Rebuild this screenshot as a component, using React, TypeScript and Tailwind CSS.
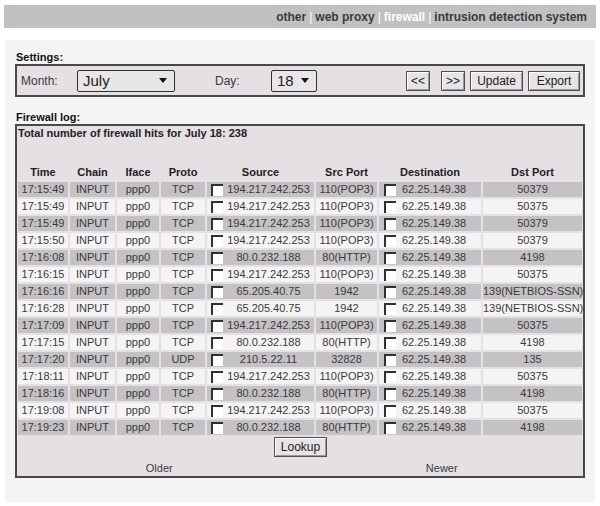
import React from 'react';

type Row = {
  time: string;
  proto: string;
  src: string;
  sport: string;
  dport: string;
};

const rows: Row[] = [
  { time: '17:15:49', proto: 'TCP', src: '194.217.242.253', sport: '110(POP3)', dport: '50379' },
  { time: '17:15:49', proto: 'TCP', src: '194.217.242.253', sport: '110(POP3)', dport: '50375' },
  { time: '17:15:49', proto: 'TCP', src: '194.217.242.253', sport: '110(POP3)', dport: '50379' },
  { time: '17:15:50', proto: 'TCP', src: '194.217.242.253', sport: '110(POP3)', dport: '50379' },
  { time: '17:16:08', proto: 'TCP', src: '80.0.232.188', sport: '80(HTTP)', dport: '4198' },
  { time: '17:16:15', proto: 'TCP', src: '194.217.242.253', sport: '110(POP3)', dport: '50375' },
  { time: '17:16:16', proto: 'TCP', src: '65.205.40.75', sport: '1942', dport: '139(NETBIOS-SSN)' },
  { time: '17:16:28', proto: 'TCP', src: '65.205.40.75', sport: '1942', dport: '139(NETBIOS-SSN)' },
  { time: '17:17:09', proto: 'TCP', src: '194.217.242.253', sport: '110(POP3)', dport: '50375' },
  { time: '17:17:15', proto: 'TCP', src: '80.0.232.188', sport: '80(HTTP)', dport: '4198' },
  { time: '17:17:20', proto: 'UDP', src: '210.5.22.11', sport: '32828', dport: '135' },
  { time: '17:18:11', proto: 'TCP', src: '194.217.242.253', sport: '110(POP3)', dport: '50375' },
  { time: '17:18:16', proto: 'TCP', src: '80.0.232.188', sport: '80(HTTP)', dport: '4198' },
  { time: '17:19:08', proto: 'TCP', src: '194.217.242.253', sport: '110(POP3)', dport: '50375' },
  { time: '17:19:23', proto: 'TCP', src: '80.0.232.188', sport: '80(HTTP)', dport: '4198' },
];

const font = { fontFamily: '"Liberation Sans", Arial, sans-serif' };

const Check = () => (
  <span className="block w-[12px] h-[12px] bg-white border-t-2 border-l-2 border-t-[#303030] border-l-[#303030] shrink-0" />
);

const Btn = ({ label, w }: { label: string; w: string }) => (
  <button
    className={`${w} h-[20px] border border-[#505050] bg-[#e6e4e6] text-[12px] text-[#222] leading-none shadow-[inset_1px_1px_0_#ffffff,inset_-1px_-1px_0_#9a989a]`}
  >
    {label}
  </button>
);

const Select = ({ value, w }: { value: string; w: string }) => (
  <div
    className={`${w} h-[22px] border border-[#303030] rounded-[2px] bg-[#e8e6e8] flex items-center justify-between pl-[5px] pr-[7px]`}
  >
    <span className="text-[15px] text-[#222] leading-none">{value}</span>
    <span className="w-0 h-0 border-l-[4px] border-r-[4px] border-t-[5px] border-l-transparent border-r-transparent border-t-[#111]" />
  </div>
);

export default function App() {
  return (
    <div className="w-[600px] h-[506px] bg-white text-[11px] text-[#3a3a3a]" style={font}>
      <div className="mx-[4px] mt-[5px] h-[23px] bg-[#c2c0c2] flex items-center justify-end pr-[9px] text-[12px] font-bold text-[#3a3a3a]">
        <span>other</span>
        <span className="text-white font-normal px-[3px]">|</span>
        <span>web proxy</span>
        <span className="text-white font-normal px-[3px]">|</span>
        <span className="text-white">firewall</span>
        <span className="text-white font-normal px-[3px]">|</span>
        <span>intrusion detection system</span>
      </div>

      <div className="mx-[5px] mt-[12px] h-[462px] bg-[#f4f4f4] px-[10px] pt-[10px]">
        <div className="font-bold text-[#111] leading-[14px] pl-[1px]">Settings:</div>
        <div className="h-[33px] border-2 border-[#484848] bg-[#e4e0e4] flex items-center pl-[4px] pr-[3px]">
          <span className="w-[56px] text-[12px]">Month:</span>
          <Select value="July" w="w-[98px]" />
          <span className="w-[56px] ml-[40px] text-[12px]">Day:</span>
          <Select value="18" w="w-[46px]" />
          <div className="ml-auto flex items-center gap-[5px]">
            <Btn label="<<" w="w-[24px]" />
            <span className="ml-[1px]" />
            <Btn label=">>" w="w-[24px]" />
            <Btn label="Update" w="w-[53px]" />
            <Btn label="Export" w="w-[52px]" />
          </div>
        </div>

        <div className="mt-[13px] font-bold text-[#111] leading-[14px] pl-[1px]">Firewall log:</div>
        <div className="h-[354px] border-2 border-[#484848] bg-[#e4e0e4] pl-[1px] pt-[1px]">
          <div className="font-bold text-[#222] leading-[13px]">
            Total number of firewall hits for July 18: 238
          </div>

          <div className="mt-[25px] grid grid-cols-[50px_45px_42px_44px_107px_61px_102px_99px] gap-[2px] leading-[15px] text-center">
            {['Time', 'Chain', 'Iface', 'Proto', 'Source', 'Src Port', 'Destination', 'Dst Port'].map((h) => (
              <div key={h} className="font-bold text-[#222] h-[15px]">
                {h}
              </div>
            ))}
            {rows.map((r, i) => {
              const bg = i % 2 === 0 ? 'bg-[#c4c2c4]' : 'bg-[#f4f4f4]';
              return (
                <React.Fragment key={i}>
                  <div className={`${bg} h-[15px]`}>{r.time}</div>
                  <div className={`${bg} h-[15px]`}>INPUT</div>
                  <div className={`${bg} h-[15px]`}>ppp0</div>
                  <div className={`${bg} h-[15px]`}>{r.proto}</div>
                  <div className={`${bg} h-[15px] flex items-center pl-[4px]`}>
                    <Check />
                    <span className="flex-1 text-center">{r.src}</span>
                  </div>
                  <div className={`${bg} h-[15px]`}>{r.sport}</div>
                  <div className={`${bg} h-[15px] flex items-center pl-[5px] gap-[6px]`}>
                    <Check />
                    <span>62.25.149.38</span>
                  </div>
                  <div className={`${bg} h-[15px] whitespace-nowrap`}>{r.dport}</div>
                </React.Fragment>
              );
            })}
          </div>

          <div className="flex justify-center mt-[2px]">
            <Btn label="Lookup" w="w-[53px]" />
          </div>
          <div className="flex mt-[3px] text-[11px]">
            <span className="flex-1 text-center">Older</span>
            <span className="flex-1 text-center">Newer</span>
          </div>
        </div>
      </div>
    </div>
  );
}
